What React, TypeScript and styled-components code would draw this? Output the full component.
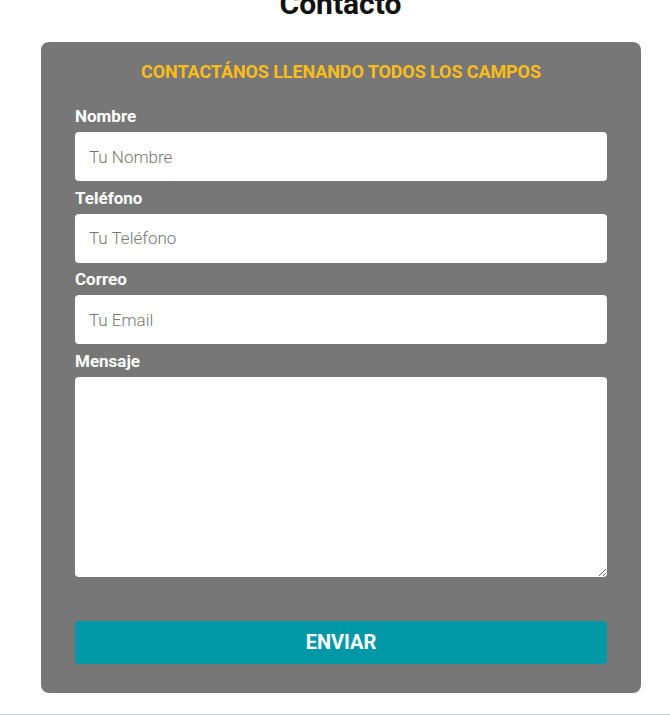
import React from "react";
import styled, { createGlobalStyle } from "styled-components";

const Global = createGlobalStyle`
  html, body { margin: 0; padding: 0; background: #fff; }
  body { font-family: Roboto, "Liberation Sans", sans-serif; overflow: hidden; }
  * { box-sizing: border-box; }
`;

const Page = styled.div`
  width: 670px;
  height: 715px;
  display: flex;
  flex-direction: column;
`;

const Title = styled.h1`
  margin: -17px 0 0;
  height: 39px;
  text-align: center;
  font-family: Roboto, sans-serif;
  font-weight: 700;
  font-size: 30px;
  line-height: 42px;
  color: #111;
  padding-left: 11px;
`;

const Card = styled.form`
  margin: 20px 29px 0 41px;
  width: 600px;
  background: #777777;
  border-radius: 8px;
  padding: 19px 34px 29px;
  display: flex;
  flex-direction: column;
`;

const Heading = styled.h2`
  margin: 0 0 25px;
  text-align: center;
  color: #fcbd1b;
  font-family: Roboto, sans-serif;
  font-weight: 700;
  font-size: 18px;
  line-height: 22px;
  letter-spacing: -0.1px;
`;

const Field = styled.label`
  display: flex;
  flex-direction: column;
  gap: 8px;
  margin-bottom: 8.5px;
`;

const LabelText = styled.span`
  color: #fff;
  font-family: Roboto, sans-serif;
  font-weight: 700;
  font-size: 17px;
  line-height: 16px;
  height: 16px;
  display: block;
`;

const Input = styled.input`
  height: 49px;
  width: 100%;
  border: none;
  border-radius: 4px;
  background: #fff;
  padding: 0 14px;
  font-family: Roboto, sans-serif;
  font-weight: 300;
  font-size: 17px;
  color: #333;
  outline: none;
  &::placeholder { color: #777; }
`;

const TextArea = styled.textarea`
  height: 200px;
  width: 100%;
  border: none;
  border-radius: 4px;
  background: #fff;
  padding: 12px 14px;
  font-family: Roboto, sans-serif;
  font-size: 17px;
  resize: vertical;
  outline: none;
`;

const Button = styled.button`
  margin-top: 44px;
  height: 43px;
  width: 100%;
  border: none;
  border-radius: 4px;
  background: #0097a7;
  color: #fff;
  font-family: Roboto, sans-serif;
  font-weight: 700;
  font-size: 20px;
  cursor: pointer;
`;

const Footer = styled.div`
  margin-top: auto;
  border-top: 1px solid #c3cad3;
  height: 0;
`;

export default function App() {
  return (
    <>
      <Global />
      <Page>
        <Title>Contacto</Title>
        <Card onSubmit={(e) => e.preventDefault()}>
          <Heading>CONTACTÁNOS LLENANDO TODOS LOS CAMPOS</Heading>
          <Field>
            <LabelText>Nombre</LabelText>
            <Input placeholder="Tu Nombre" />
          </Field>
          <Field>
            <LabelText>Teléfono</LabelText>
            <Input placeholder="Tu Teléfono" />
          </Field>
          <Field>
            <LabelText>Correo</LabelText>
            <Input placeholder="Tu Email" />
          </Field>
          <Field style={{ marginBottom: 0 }}>
            <LabelText>Mensaje</LabelText>
            <TextArea />
          </Field>
          <Button type="submit">ENVIAR</Button>
        </Card>
        <Footer />
      </Page>
    </>
  );
}
